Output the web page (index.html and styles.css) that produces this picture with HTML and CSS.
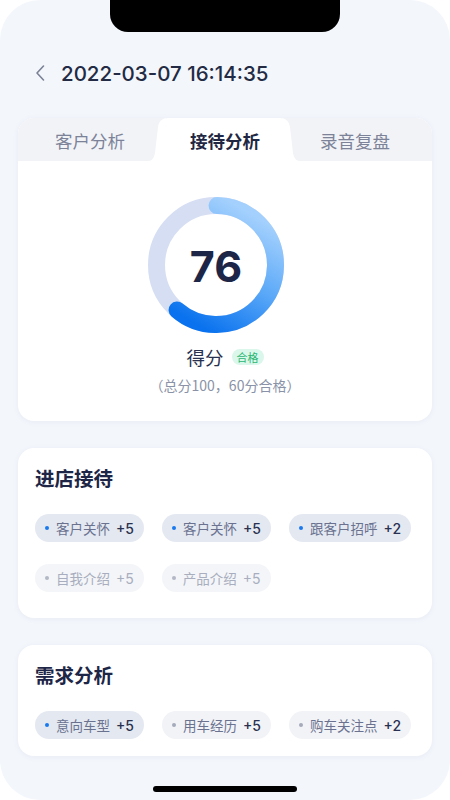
FILE: index.html
```html
<!DOCTYPE html>
<html lang="zh-CN">
<head>
    <meta charset="UTF-8">
    <meta name="viewport" content="width=device-width, initial-scale=1.0">
    <title>接待分析</title>
    <link rel="stylesheet" href="styles.css">
</head>
<body>
    <div class="phone">
        <div class="notch"></div>

        <div class="header">
            <svg class="back" width="12" height="18" viewBox="0 0 12 18">
                <path d="M9.5 2 L3 9 L9.5 16" fill="none" stroke="#7b8296" stroke-width="1.6" stroke-linecap="round" stroke-linejoin="round"/>
            </svg>
            <span class="time">2022-03-07 16:14:35</span>
        </div>

        <div class="card score-card">
            <div class="tabs">
                <div class="tab">客户分析</div>
                <div class="tab active">接待分析</div>
                <div class="tab last">录音复盘</div>
            </div>

            <div class="score">
                <div class="ring">
                    <svg width="136" height="136" viewBox="0 0 136 136">
                        <defs>
                            <linearGradient id="arc" x1="0.95" y1="0.75" x2="0.05" y2="0.25">
                                <stop offset="0" stop-color="#a3d0fd"/>
                                <stop offset="0.5" stop-color="#5aa8f8"/>
                                <stop offset="1" stop-color="#0a72ee"/>
                            </linearGradient>
                        </defs>
                        <circle cx="68" cy="68" r="59.5" fill="none" stroke="#d6def4" stroke-width="17"/>
                        <circle cx="68" cy="68" r="59.5" fill="none" stroke="url(#arc)" stroke-width="17"
                                stroke-linecap="round" stroke-dasharray="228 400" transform="rotate(-89 68 68)"/>
                    </svg>
                    <span class="value">76</span>
                </div>
                <div class="label">得分 <span class="badge">合格</span></div>
                <div class="note">（总分100，60分合格）</div>
            </div>
        </div>

        <div class="card section section-loose">
            <h2>进店接待</h2>
            <div class="chips">
                <span class="chip hit"><i></i>客户关怀<b>+5</b></span>
                <span class="chip hit"><i></i>客户关怀<b>+5</b></span>
                <span class="chip hit"><i></i>跟客户招呼<b>+2</b></span>
                <span class="chip off"><i></i>自我介绍<b>+5</b></span>
                <span class="chip off"><i></i>产品介绍<b>+5</b></span>
            </div>
        </div>

        <div class="card section">
            <h2>需求分析</h2>
            <div class="chips">
                <span class="chip hit"><i></i>意向车型<b>+5</b></span>
                <span class="chip"><i></i>用车经历<b>+5</b></span>
                <span class="chip"><i></i>购车关注点<b>+2</b></span>
            </div>
        </div>

        <div class="home-bar"></div>
    </div>
</body>
</html>
```

FILE: styles.css
```css
body {
    margin: 0;
    background-color: #ffffff;
    font-family: "Noto Sans CJK SC", "Noto Sans", sans-serif;
}
.phone {
    position: relative;
    width: 450px;
    height: 800px;
    background-color: #f3f6fb;
    border-radius: 40px;
    overflow: hidden;
}
.notch {
    position: absolute;
    top: 0;
    left: 110px;
    width: 230px;
    height: 32px;
    background-color: #000;
    border-radius: 0 0 18px 18px;
}
.header {
    display: flex;
    align-items: center;
    gap: 15px;
    height: 30px;
    padding: 58px 0 0 34px;
}
.back {
    display: block;
}
.time {
    font-family: Inter, "Noto Sans", sans-serif;
    font-size: 20.5px;
    font-weight: 500;
    color: #222a44;
}
.card {
    margin: 0 18px;
    background-color: #fff;
    border-radius: 16px;
    box-shadow: 0 1px 6px rgba(40, 60, 110, 0.05);
    overflow: hidden;
}
.score-card {
    margin-top: 30px;
}
.tabs {
    display: grid;
    grid-template-columns: 144px 126px 144px;
    height: 43px;
    background-color: #f2f3f7;
}
.tab {
    position: relative;
    display: flex;
    align-items: center;
    justify-content: center;
    font-size: 17.5px;
    color: #7c8399;
    padding-top: 1px;
}
.tab.last {
    padding-right: 10px;
}
.tab.active {
    z-index: 1;
    color: #1f2742;
    font-weight: 700;
}
.tab.active::before {
    content: "";
    position: absolute;
    z-index: -1;
    top: 0;
    bottom: 0;
    left: -14px;
    width: 152px;
    background-color: #fff;
    clip-path: path('M0 43 C4 43 6 40 7 35 L10 9 C11 3 14 0 21 0 L131 0 C138 0 141 3 142 9 L145 35 C146 40 148 43 152 43 Z');
}
.score {
    display: flex;
    flex-direction: column;
    align-items: center;
    padding: 36px 0 26px;
}
.ring {
    position: relative;
    width: 136px;
    height: 136px;
    margin-left: -18px;
}
.ring svg {
    display: block;
}
.value {
    position: absolute;
    top: 0;
    left: 0;
    right: 0;
    bottom: 0;
    display: flex;
    align-items: center;
    justify-content: center;
    font-family: Inter, "Noto Sans", sans-serif;
    font-size: 43px;
    font-weight: 700;
    color: #1d2646;
    padding-top: 2px;
}
.label {
    display: flex;
    align-items: center;
    gap: 8px;
    margin-top: 11px;
    font-size: 18.5px;
    color: #283150;
    line-height: 26px;
}
.badge {
    font-size: 11px;
    line-height: 16px;
    padding: 0 5px;
    border-radius: 8px;
    background-color: #dbf6ea;
    color: #2bb673;
}
.note {
    margin-top: 5px;
    font-size: 14px;
    color: #8a92a7;
    line-height: 20px;
}
.section {
    margin-top: 27px;
    padding: 17px 12px 17px 17px;
}
.section-loose {
    padding-bottom: 26px;
}
.section h2 {
    margin: 0;
    font-size: 19.5px;
    line-height: 26px;
    font-weight: 700;
    color: #1d2646;
}
.chips {
    display: flex;
    flex-wrap: wrap;
    gap: 22px 18px;
    margin-top: 23px;
}
.chip {
    display: flex;
    align-items: center;
    height: 28px;
    padding: 0 10px;
    border-radius: 14px;
    background-color: #f2f3f7;
    font-size: 13.5px;
    color: #6a7290;
}
.chip i {
    width: 4px;
    height: 4px;
    border-radius: 50%;
    background-color: #a5abba;
    margin-right: 7px;
}
.chip b {
    font-family: Inter, "Noto Sans", sans-serif;
    font-weight: 500;
    font-size: 14px;
    color: #2a3150;
    margin-left: 6px;
}
.chip.hit {
    background-color: #e4e8f1;
}
.chip.hit i {
    background-color: #1a79ee;
}
.chip.off {
    background-color: #f4f5f8;
    color: #a8aebe;
}
.chip.off i {
    background-color: #b3b8c6;
}
.chip.off b {
    color: #a8aebe;
    font-weight: 400;
}
.home-bar {
    position: absolute;
    left: 153px;
    bottom: 8px;
    width: 144px;
    height: 6px;
    border-radius: 3px;
    background-color: #000;
}
```
